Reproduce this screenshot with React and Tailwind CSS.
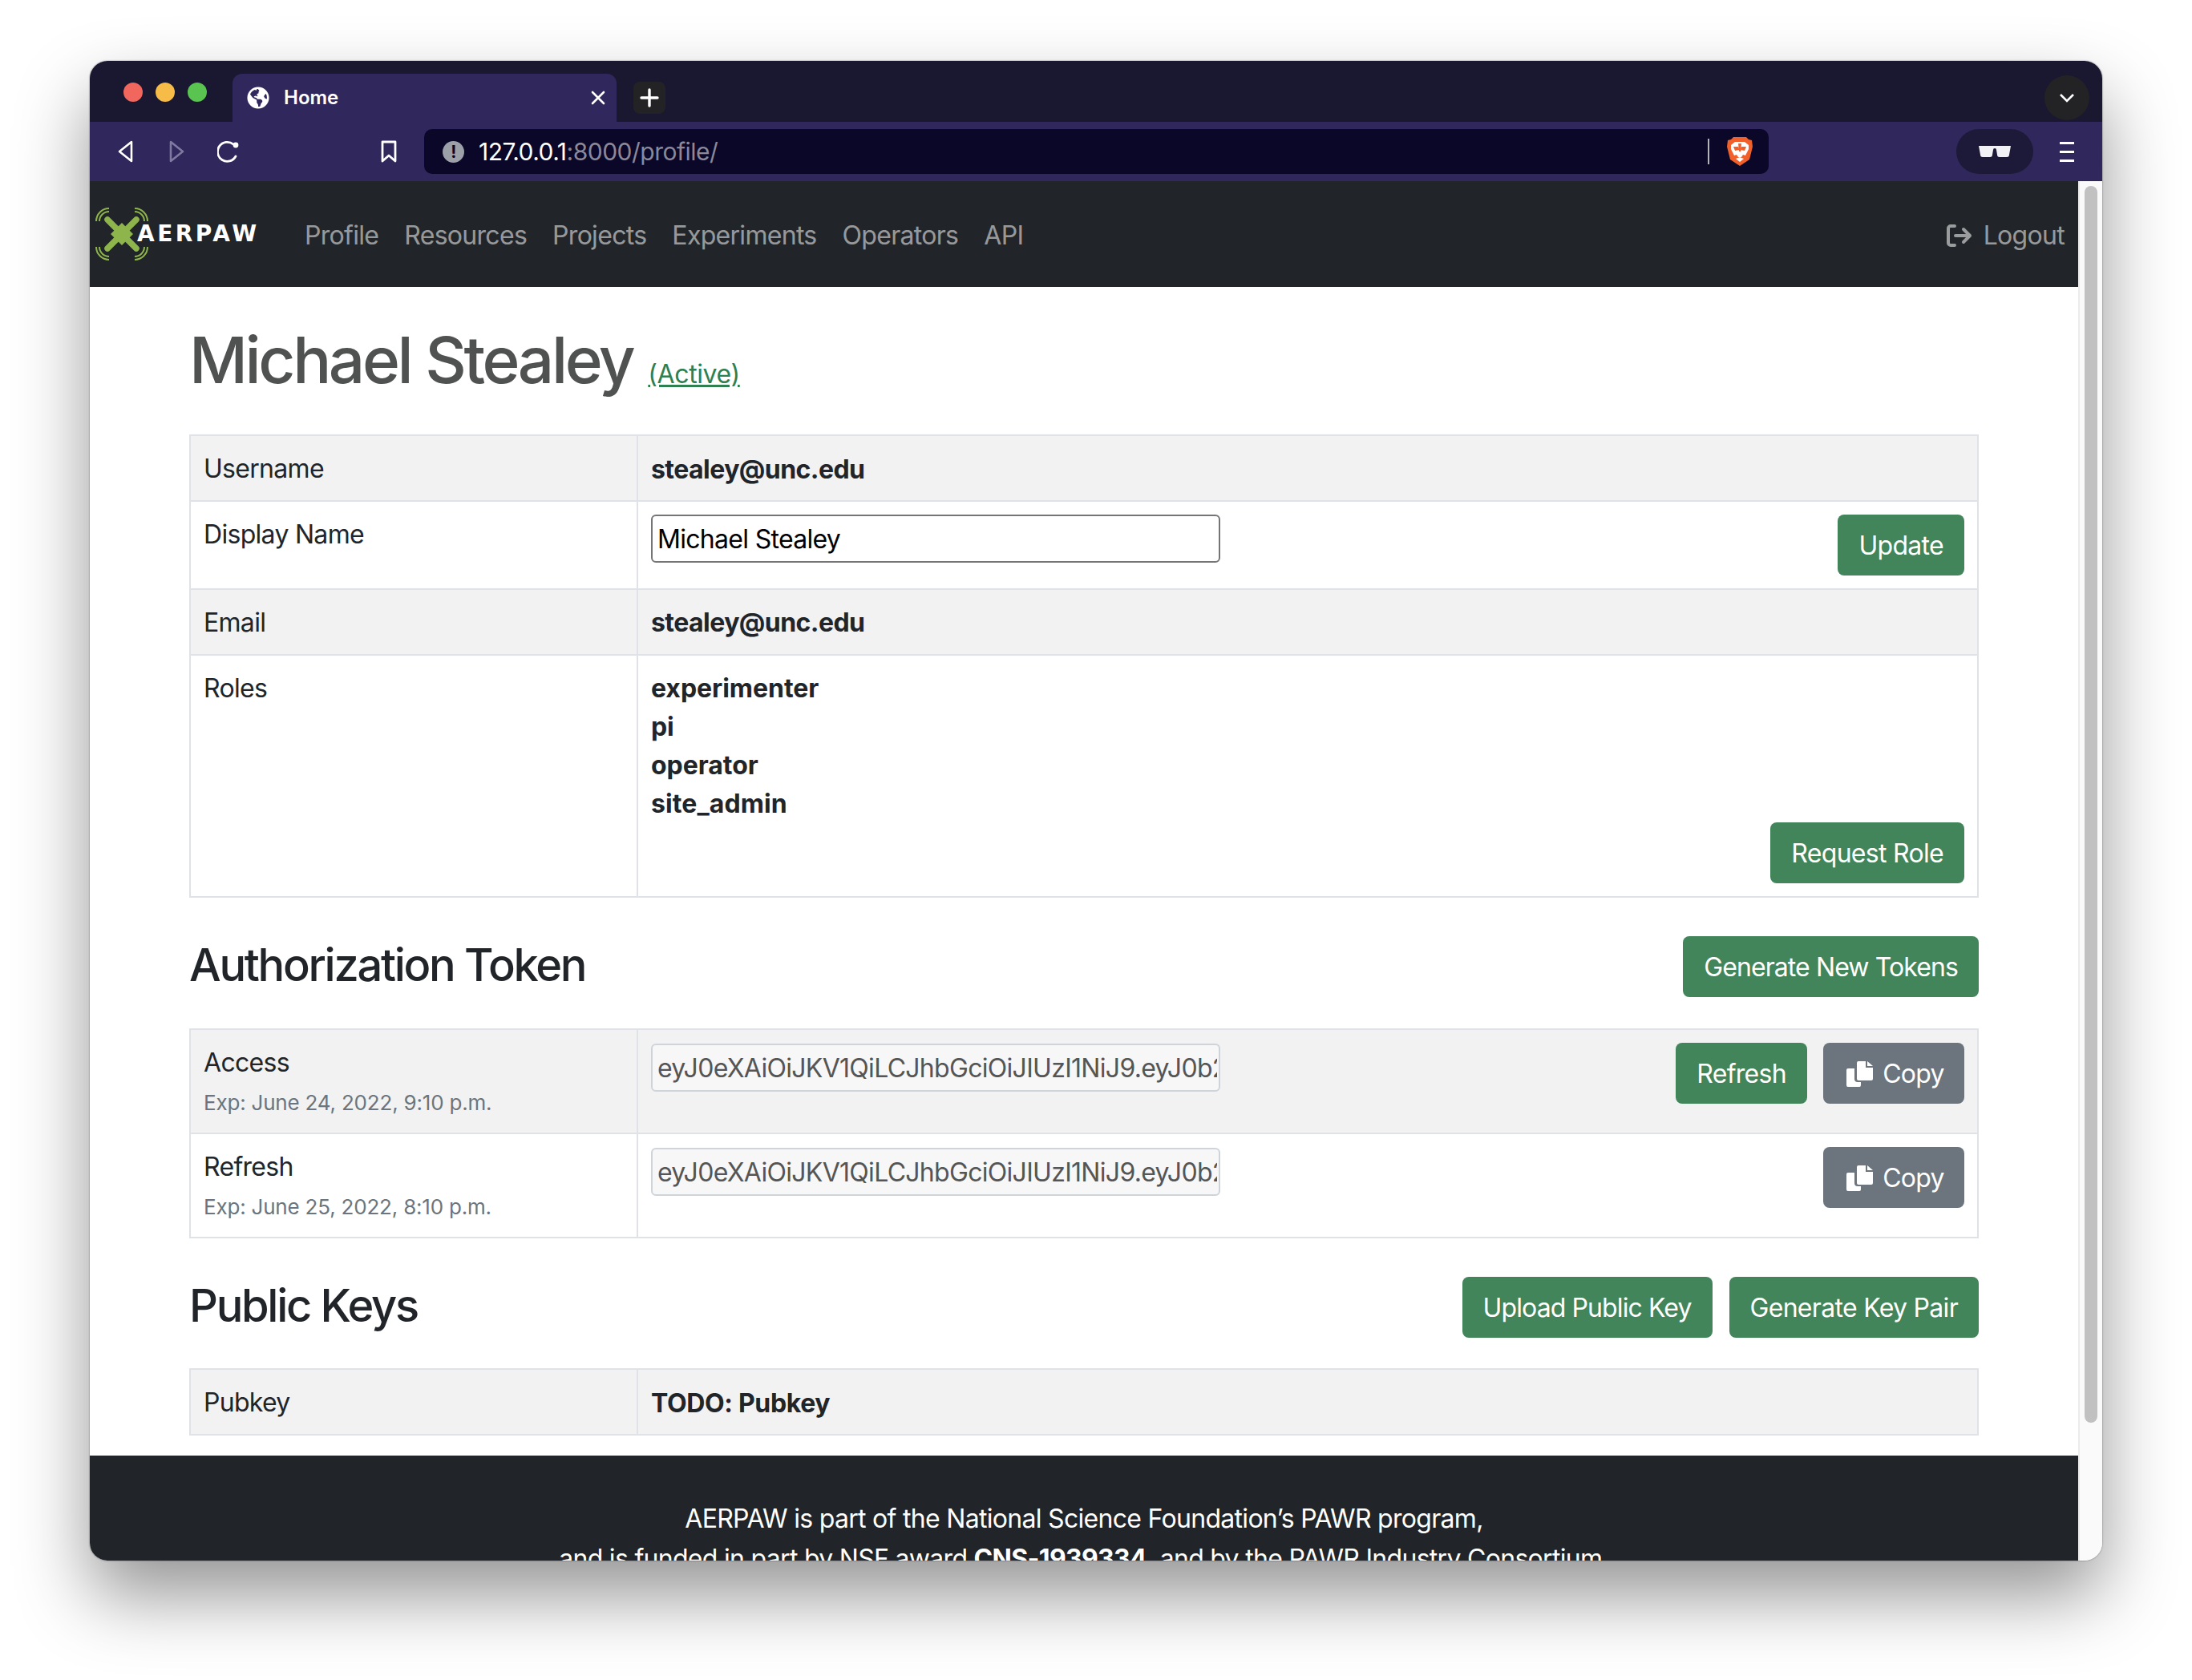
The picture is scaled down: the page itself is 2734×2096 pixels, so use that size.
import React from "react";
import { FaGlobeAmericas } from "react-icons/fa";

const font = "[font-family:Inter,'Noto_Sans',sans-serif]";
const token = "eyJ0eXAiOiJKV1QiLCJhbGciOiJIUzI1NiJ9.eyJ0b2tlbl90eXBlIjoiYWNjZXNzIn0";

function Btn({ children, grey, className = "" }) {
  return (
    <button className={`h-[76px] px-[26px] pt-[2px] rounded-[8px] text-[32px] leading-[48px] text-white flex items-center shrink-0 ${grey ? "bg-[#6c757d]" : "bg-[#42855a]"} ${className}`}>
      {children}
    </button>
  );
}

function CopyBtn() {
  return (
    <Btn grey className="w-[176px] !pl-[4px] !pr-0 justify-center gap-[12px]">
      <svg viewBox="0 0 33 32" className="w-[33px] h-[32px] shrink-0" fill="#fff">
        <path d="M13 2a2 2 0 0 1 2-2h9v8h9v14a2 2 0 0 1-2 2H15a2 2 0 0 1-2-2z" />
        <path d="M26 0l7 6h-7z" />
        <path d="M0 11a2 2 0 0 1 2-2h8v13a4 4 0 0 0 4 4h4v4a2 2 0 0 1-2 2H2a2 2 0 0 1-2-2z" />
      </svg>
      <span>Copy</span>
    </Btn>
  );
}

function Row({ shade, label, sub, children, h, first }) {
  return (
    <div className={`flex border-x-2 border-b-2 border-[#dfe3e7] ${first ? "border-t-2" : ""} ${shade ? "bg-[#f2f2f2]" : "bg-white"} ${h}`}>
      <div className={`w-[558px] shrink-0 border-r-2 border-[#dfe3e7] px-[16px] text-[#212529] ${sub ? "pt-[17px]" : "pt-[17px]"}`}>
        <div className="text-[32px] leading-[48px]">{label}</div>
        {sub && <div className="text-[26px] leading-[39px] mt-[6px] tracking-[-0.2px] text-[#6c757d]">{sub}</div>}
      </div>
      <div className="flex-1 min-w-0 px-[16px] pt-[16px] text-[32px] leading-[48px] text-[#212529]">{children}</div>
    </div>
  );
}

function Strong({ children, className = "tracking-[-0.55px]" }) {
  return <b className={`font-bold block ${className}`}>{children}</b>;
}

function TokenInput() {
  return (
    <input
      readOnly
      value={token}
      className="w-[710px] h-[60px] mt-[1px] shrink-0 rounded-[6px] border-2 border-[#ced4da] bg-[#f7f7f7] pl-[6px] pr-[2px] text-[32px] text-[#555] tracking-[-0.7px] outline-none"
    />
  );
}

function Drone() {
  return (
    <svg viewBox="0 0 66 66" className="w-[66px] h-[66px] shrink-0" fill="none">
      <path d="M15 15 L51 51 M51 15 L15 51" stroke="#8db54b" strokeWidth="7.5" strokeLinecap="round" />
      <path d="M19 33 L33 19 L47 33 L33 47z" fill="#8db54b" />
      <g stroke="#8db54b" strokeWidth="2" fill="none">
        <path d="M1 17 A16 16 0 0 1 17 1" />
        <path d="M5 17 A12 12 0 0 1 17 5" />
        <path d="M49 1 A16 16 0 0 1 65 17" />
        <path d="M49 5 A12 12 0 0 1 61 17" />
        <path d="M1 49 A16 16 0 0 0 17 65" />
        <path d="M5 49 A12 12 0 0 0 17 61" />
        <path d="M65 49 A16 16 0 0 1 49 65" />
        <path d="M61 49 A12 12 0 0 1 49 61" />
      </g>
    </svg>
  );
}

function Lion() {
  return (
    <svg viewBox="0 0 32 36" className="w-[32px] h-[36px] block">
      <path d="M8 0h16l3 3 4 1 1 8-1 4-3 12-12 8-12-8L1 16 0 12l1-8 4-1z" fill="#f1602a" />
      <path d="M5 10l5-4h12l5 4v5l-4 8-3-1-2 3h-4l-2-3-3 1-4-8z" fill="#fff" />
      <path d="M8 12h6l1 4-5 1zM24 12h-6l-1 4 5 1zM14 8h4l-1 10h-2z" fill="#f1602a" />
      <path d="M11 27l5-2 5 2-5 4z" fill="#fff" />
    </svg>
  );
}

export default function App() {
  return (
    <div className={`w-[2734px] h-[2096px] bg-white pt-[76px] pl-[112px] overflow-hidden tracking-[-0.7px] ${font}`}>
      <div className="w-[2510px] h-[1871px] rounded-[22px] overflow-hidden flex flex-col shadow-[0_0_2px_rgba(0,0,0,0.55),0_44px_90px_rgba(0,0,0,0.42)]">
        {/* tab strip */}
        <div className="h-[76px] shrink-0 bg-[#1a1730] flex items-end pl-[42px] pr-[16px]">
          <div className="flex gap-[16px] self-start mt-[27px] w-[136px] shrink-0">
            <span className="w-[24px] h-[24px] rounded-full bg-[#f1675e]" />
            <span className="w-[24px] h-[24px] rounded-full bg-[#f6bc47]" />
            <span className="w-[24px] h-[24px] rounded-full bg-[#5ac451]" />
          </div>
          <div className="w-[479px] h-[60px] rounded-t-[12px] bg-[#30275c] flex items-center pl-[18px] pr-[14px] text-white text-[24px] font-semibold tracking-normal">
            <FaGlobeAmericas className="w-[28px] h-[28px] mr-[18px]" />
            <span>Home</span>
            <svg viewBox="0 0 18 18" className="w-[18px] h-[18px] ml-auto" stroke="#fff" strokeWidth="2.6" strokeLinecap="round">
              <path d="M2 2l14 14M16 2L2 16" />
            </svg>
          </div>
          <div className="ml-[21px] mb-[10px] w-[40px] h-[40px] rounded-[8px] bg-[#232325] flex items-center justify-center">
            <svg viewBox="0 0 24 24" className="w-[24px] h-[24px]" stroke="#fff" strokeWidth="3.4" strokeLinecap="round">
              <path d="M12 2v20M2 12h20" />
            </svg>
          </div>
          <div className="ml-auto mb-[2px] w-[56px] h-[56px] rounded-full bg-[#232325] flex items-center justify-center">
            <svg viewBox="0 0 20 14" className="w-[20px] h-[14px]" fill="none" stroke="#fff" strokeWidth="2.6">
              <path d="M2 3l8 8 8-8" />
            </svg>
          </div>
        </div>
        {/* toolbar */}
        <div className="h-[74px] shrink-0 bg-[#30275c] flex items-center pl-[34px] pr-[35px]">
          <svg viewBox="0 0 20 28" className="w-[20px] h-[28px]" fill="none" stroke="#fff" strokeWidth="2.6" strokeLinejoin="round"><path d="M18 2v24L3 14z" /></svg>
          <svg viewBox="0 0 20 28" className="w-[20px] h-[28px] ml-[45px]" fill="none" stroke="#7f789f" strokeWidth="2.6" strokeLinejoin="round"><path d="M2 2v24l15-12z" /></svg>
          <svg viewBox="0 0 28 28" className="w-[28px] h-[28px] ml-[40px]" fill="none" stroke="#fff" strokeWidth="2.8" strokeLinecap="round"><path d="M23 20a12 12 0 1 1-3-15" /><circle cx="23" cy="6" r="3.4" fill="#fff" stroke="none" /></svg>
          <svg viewBox="0 0 20 28" className="w-[20px] h-[28px] ml-[176px]" fill="none" stroke="#fff" strokeWidth="2.8" strokeLinejoin="round"><path d="M2 2h16v24l-8-7-8 7z" /></svg>
          <div className="ml-[34px] w-[1678px] h-[56px] rounded-[10px] bg-[#0a0729] flex items-center pl-[23px] pr-[20px]">
            <span className="w-[27px] h-[27px] rounded-full bg-[#9ca0a8] text-[#0a0729] text-[21px] font-bold leading-[27px] text-center">!</span>
            <span className="ml-[18px] text-[30px] leading-[40px] text-white tracking-[-0.5px]">127.0.0.1<span className="text-[#8b8899]">:8000/profile/</span></span>
            <span className="ml-auto w-[2px] h-[32px] bg-[#b4b4b8]" />
            <span className="ml-[22px]"><Lion /></span>
          </div>
          <div className="ml-[234px] w-[96px] h-[56px] rounded-full bg-[#1c1a38] flex items-center justify-center">
            <svg viewBox="0 0 40 15" className="w-[40px] h-[15px]" fill="#f1f1f6">
              <path d="M0 0h40l-2 11a3 3 0 0 1-3 3h-9a3 3 0 0 1-3-3l-1-6a2 2 0 0 0-4 0l-1 6a3 3 0 0 1-3 3H5a3 3 0 0 1-3-3z" />
            </svg>
          </div>
          <div className="ml-[33px] w-[18px] flex flex-col gap-[8px]">
            <span className="h-[3px] bg-white" />
            <span className="h-[3px] bg-white" />
            <span className="h-[3px] bg-white" />
          </div>
        </div>
        {/* viewport */}
        <div className="flex-1 min-h-0 flex overflow-hidden">
          <div className="w-[2480px] shrink-0 bg-white">
            <nav className="h-[132px] bg-[#212529] flex items-center pl-[7px] pr-[17px] text-[32px] text-[#ffffff8c]">
              <div className="flex items-center w-[245px] shrink-0">
                <Drone />
                <span className="-ml-[14px] [font-family:'DejaVu_Sans',sans-serif] font-bold text-[28px] tracking-[3.5px] text-white">AERPAW</span>
              </div>
              {["Profile", "Resources", "Projects", "Experiments", "Operators", "API"].map((t) => (
                <a key={t} className="px-[16px] pt-[3px]">{t}</a>
              ))}
              <div className="ml-auto flex items-center gap-[14px] pt-[3px]">
                <svg viewBox="0 0 32 28" className="w-[32px] h-[28px]" fill="none" stroke="#ffffff8c" strokeWidth="4" strokeLinecap="round" strokeLinejoin="round">
                  <path d="M10 2H5a3 3 0 0 0-3 3v18a3 3 0 0 0 3 3h5M11 14h18M21 6l8 8-8 8" />
                </svg>
                <span>Logout</span>
              </div>
            </nav>
            <main className="px-[124px] pt-[36px] text-[#212529]">
              <div className="h-[110px] flex items-center">
                <h1 className="text-[80px] leading-[96px] font-medium tracking-[-3.4px] text-[#505252]">Michael Stealey</h1>
                <a className="ml-[19px] mt-[35px] text-[32px] tracking-[-0.4px] text-[#2f8050] underline">(Active)</a>
              </div>
              <div className="mt-[38px]">
                <Row first shade label="Username" h="h-[84px]"><div className="pt-[2px]"><Strong>stealey@unc.edu</Strong></div></Row>
                <Row label="Display Name" h="h-[110px]">
                  <div className="flex justify-between">
                    <input
                      readOnly
                      value="Michael Stealey"
                      className="w-[710px] h-[60px] rounded-[6px] border-2 border-[#757575] bg-white px-[6px] text-[32px] text-black tracking-[-0.7px] outline-none"
                    />
                    <Btn>Update</Btn>
                  </div>
                </Row>
                <Row shade label="Email" h="h-[82px]"><div className="pt-[1px]"><Strong>stealey@unc.edu</Strong></div></Row>
                <Row label="Roles" h="h-[302px]">
                  <div className="pt-[1px] -mb-[1px]">
                    <Strong className="tracking-[-0.05px]">experimenter</Strong>
                    <Strong className="tracking-[-0.05px]">pi</Strong>
                    <Strong className="tracking-[-0.05px]">operator</Strong>
                    <Strong className="tracking-[0.1px]">site_admin</Strong>
                  </div>
                  <div className="flex justify-end"><Btn>Request Role</Btn></div>
                </Row>
              </div>
              <div className="mt-[48px] h-[76px] flex items-center justify-between">
                <h2 className="text-[56px] leading-[68px] font-medium tracking-[-2.3px] mb-[4px]">Authorization Token</h2>
                <Btn className="tracking-[-0.9px]">Generate New Tokens</Btn>
              </div>
              <div className="mt-[39px]">
                <Row first shade label="Access" sub="Exp: June 24, 2022, 9:10 p.m." h="h-[132px]">
                  <div className="flex items-start">
                    <TokenInput />
                    <Btn className="ml-auto">Refresh</Btn>
                    <span className="ml-[20px]"><CopyBtn /></span>
                  </div>
                </Row>
                <Row label="Refresh" sub="Exp: June 25, 2022, 8:10 p.m." h="h-[130px]">
                  <div className="flex items-start justify-between">
                    <TokenInput />
                    <CopyBtn />
                  </div>
                </Row>
              </div>
              <div className="mt-[48px] h-[76px] flex items-center justify-between">
                <h2 className="text-[56px] leading-[68px] font-medium tracking-[-2.3px] mb-[4px]">Public Keys</h2>
                <div className="flex gap-[21px]">
                  <Btn className="tracking-[-0.9px]">Upload Public Key</Btn>
                  <Btn>Generate Key Pair</Btn>
                </div>
              </div>
              <div className="mt-[38px]">
                <Row first shade label="Pubkey" h="h-[84px]"><div className="pt-[2px]"><Strong className="tracking-[-0.35px]">TODO: Pubkey</Strong></div></Row>
              </div>
            </main>
            <footer className="mt-[25px] bg-[#212529] pt-[54px] h-[200px] overflow-hidden text-center text-white text-[32px] leading-[50px]">
              <p>AERPAW is part of the National Science Foundation’s PAWR program,</p>
              <p>and is funded in part by NSF award <b className="font-bold">CNS-1939334</b>, and by the PAWR Industry Consortium.</p>
            </footer>
          </div>
          <div className="w-[30px] shrink-0 bg-[#fafafa] border-l-2 border-[#ececec] pl-[6px] pt-[6px]">
            <div className="w-[16px] h-[1543px] rounded-full bg-[#c1c1c1]" />
          </div>
        </div>
      </div>
    </div>
  );
}
